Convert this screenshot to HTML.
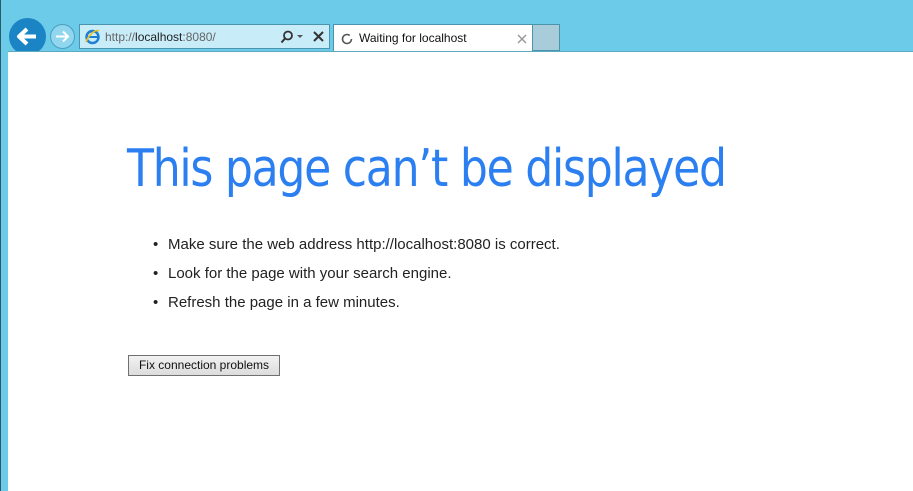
<!DOCTYPE html>
<html><head><meta charset="utf-8"><style>
*{margin:0;padding:0;box-sizing:border-box}
body{width:913px;height:491px;background:#6bcbe9;position:relative;overflow:hidden;font-family:"Liberation Sans",sans-serif}
.edge{position:absolute;left:0;top:0;width:1px;height:491px;background:#2a5a6a}
.page{position:absolute;left:8px;top:51px;right:0;bottom:0;background:#fff;border-top:1px solid #5ea9c0}
.back{position:absolute;left:9px;top:18px;width:37px;height:37px;border-radius:50%;background:#1a84c4}
.fwd{position:absolute;left:50px;top:24px;width:25px;height:25px;border-radius:50%;border:1px solid #4a9fc0;background:#8fd6ee}
.addr{position:absolute;left:79px;top:24px;width:251px;height:25px;background:#c8ecf8;border:1px solid #4a94ae}
.addr span{position:absolute;left:25px;top:5px;font-size:12px;color:#666}
.addr b{font-weight:normal;color:#222}
.tab{position:absolute;left:333px;top:24px;width:200px;height:28px;background:#fff;border:1px solid #4a94ae;border-bottom:none}
.tab span{position:absolute;left:25px;top:6px;font-size:12px;color:#111}
.newtab{position:absolute;left:533px;top:24px;width:27px;height:27px;background:#a8ccda;border:1px solid #4a94ae;border-left:none}
h1{position:absolute;left:127px;top:139px;font-family:"DejaVu Sans","Liberation Sans",sans-serif;font-weight:normal;font-size:52px;color:#2b7ff0;letter-spacing:-1.5px;white-space:nowrap;transform:scaleX(0.849);transform-origin:0 0}
ul{position:absolute;left:153px;top:236px;list-style:none;font-size:15px;color:#222}
li{height:29px;line-height:18px}
li:before{content:"•";position:absolute;left:0}
li span{margin-left:15px}
.btn{position:absolute;left:128px;top:355px;width:152px;height:21px;border:1px solid #707070;background:linear-gradient(#f2f2f2,#dcdcdc);font-size:12px;color:#111;text-align:center;line-height:19px}
</style></head><body>
<div class="edge"></div>
<div class="back"><svg width="37" height="37" viewBox="0 0 37 37"><path d="M27 18.5H11M18 11l-8 7.5 8 7.5" stroke="#fff" stroke-width="4" fill="none" stroke-linejoin="round"/></svg></div>
<div class="fwd"><svg width="23" height="23" viewBox="0 0 23 23"><path d="M5 11.5h12M12 6.5l5 5-5 5" stroke="#fff" stroke-width="2" fill="none"/></svg></div>
<div class="addr">
<svg style="position:absolute;left:4px;top:3px" width="17" height="17" viewBox="0 0 17 17"><circle cx="8.5" cy="9" r="6" fill="none" stroke="#1d7ed6" stroke-width="2.4"/><path d="M3 9h11" stroke="#1d7ed6" stroke-width="2"/><path d="M2 14c3-8 10-13 13-11" stroke="#f2c01a" stroke-width="1.6" fill="none"/></svg>
<span>http://<b>localhost</b>:8080/</span>
<svg style="position:absolute;left:200px;top:5px" width="48" height="14" viewBox="0 0 48 14"><circle cx="8" cy="5.5" r="4" fill="none" stroke="#333" stroke-width="1.8"/><path d="M5 8.5L1.5 12.5" stroke="#333" stroke-width="2"/><path d="M17 5h6l-3 3z" fill="#555"/><path d="M34 2l9 9M43 2l-9 9" stroke="#333" stroke-width="2"/></svg>
</div>
<div class="tab">
<svg style="position:absolute;left:7px;top:8px" width="12" height="12" viewBox="0 0 12 12"><circle cx="6" cy="6" r="4.5" fill="none" stroke="#555" stroke-width="1.6" stroke-dasharray="24 5"/></svg>
<span>Waiting for localhost</span>
<svg style="position:absolute;left:183px;top:9px" width="10" height="10" viewBox="0 0 10 10"><path d="M1 1l8 8M9 1l-8 8" stroke="#999" stroke-width="1.5"/></svg>
</div>
<div class="newtab"></div>
<div class="page"></div>
<h1>This page can’t be displayed</h1>
<ul>
<li><span>Make sure the web address http://localhost:8080 is correct.</span></li>
<li><span>Look for the page with your search engine.</span></li>
<li><span>Refresh the page in a few minutes.</span></li>
</ul>
<div class="btn">Fix connection problems</div>
</body></html>
